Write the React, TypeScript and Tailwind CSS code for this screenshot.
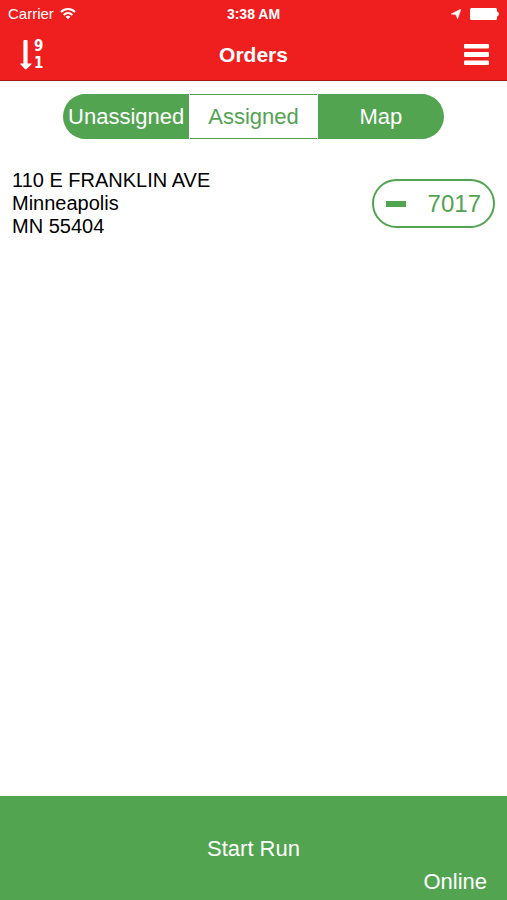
import { useState } from "react";

const tabs = ["Unassigned", "Assigned", "Map"];

const orders = [
  {
    id: "7017",
    street: "110 E FRANKLIN AVE",
    city: "Minneapolis",
    region: "MN 55404",
  },
];

function StatusBar() {
  return (
    <div className="grid grid-cols-3 items-center h-7 px-2 text-[15px] leading-5">
      <div className="flex items-center gap-1.5">
        <span>Carrier</span>
        <svg className="w-4 h-3" viewBox="0 0 16 12" fill="none" stroke="white" strokeWidth="2" aria-hidden="true">
          <path d="M1 4C5 0 11 0 15 4" />
          <path d="M3.6 6.9c2.6-2.4 6.2-2.4 8.8 0" />
          <path d="M8 11.2 5.5 8.7c1.4-1.2 3.6-1.2 5 0z" fill="white" stroke="none" />
        </svg>
      </div>
      <span className="text-center text-sm font-bold">3:38 AM</span>
      <div className="flex items-center justify-end gap-2">
        <svg className="w-2.5 h-2.5" viewBox="0 0 10 10" fill="white" aria-hidden="true">
          <path d="M10 0 6.6 10 5 5.8 0 5z" stroke="white" strokeWidth=".4" />
        </svg>
        <svg className="w-[30px] h-3" viewBox="0 0 30 12" fill="white" aria-hidden="true">
          <rect x="1" width="27" height="12" rx="1.5" />
          <path d="M28 3.5c2.6.8 2.6 4.2 0 5z" />
        </svg>
      </div>
    </div>
  );
}

function NavBar() {
  return (
    <div className="grid grid-cols-3 items-center px-4 pt-0.5 h-[52px]">
      <button
        type="button"
        aria-label="Sort orders"
        className="flex items-center gap-0.5 pl-1 justify-self-start cursor-pointer"
      >
        <svg className="w-3 h-[30px]" viewBox="0 0 12 30" fill="white" aria-hidden="true">
          <path d="M3.4 1q0-1 1-1h2.200q1 0 1 1v22.500h3.600q1 0 .3.800l-4.800 4.700q-.9.800-1.800 0L.4 24.300Q-.3 23.500.7 23.500h2.700z" />
        </svg>
        <span className="flex flex-col text-[15px] leading-[17px] font-bold font-['DejaVu_Sans_Condensed','DejaVu_Sans',sans-serif]">
          <span>9</span>
          <span>1</span>
        </span>
      </button>
      <h1 className="text-center text-[21px] leading-6 font-bold">Orders</h1>
      <button type="button" aria-label="Menu" className="justify-self-end cursor-pointer">
        <svg className="w-7 h-6" viewBox="0 0 28 24" fill="white" aria-hidden="true">
          <rect x="1" y="1" width="25" height="4.5" rx="1" />
          <rect x="1" y="9" width="25" height="5" rx="1" />
          <rect x="1" y="17.5" width="25" height="4.5" rx="1" />
        </svg>
      </button>
    </div>
  );
}

function App() {
  const [active, setActive] = useState("Assigned");

  return (
    <div className="flex flex-col min-h-screen bg-white font-['Liberation_Sans',Arial,sans-serif]">
      <header className="bg-[#ef1f1f] text-white border-b border-[#a81c18]">
        <StatusBar />
        <NavBar />
      </header>

      <main className="flex-1">
        <div
          role="tablist"
          className="flex gap-px mx-[63px] mt-[13px] h-[45px] rounded-full overflow-hidden text-[22px]"
        >
          {tabs.map((tab) => (
            <button
              key={tab}
              type="button"
              role="tab"
              aria-selected={active === tab}
              onClick={() => setActive(tab)}
              className={
                active === tab
                  ? "flex-1 basis-0 min-w-0 cursor-pointer border-y border-[#53a451] bg-white text-[#53a451]"
                  : "flex-1 basis-0 min-w-0 cursor-pointer border-y border-[#53a451] bg-[#53a451] text-white"
              }
            >
              {tab}
            </button>
          ))}
        </div>

        <ul className="mt-[30px]">
          {orders.map((order) => (
            <li key={order.id} className="flex items-center justify-between px-3">
              <address className="not-italic text-xl leading-[23px] text-black">
                {order.street}
                <br />
                {order.city}
                <br />
                {order.region}
              </address>
              <button
                type="button"
                className="flex items-center justify-between w-[123px] h-[49px] px-3 rounded-full border-2 border-[#53a451] text-2xl text-[#53a451] cursor-pointer"
              >
                <span className="w-5 h-1.5 bg-[#53a451]" />
                {order.id}
              </button>
            </li>
          ))}
        </ul>
      </main>

      <footer className="grid h-[104px] bg-[#53a451] text-[22px] text-white">
        <button type="button" className="col-start-1 row-start-1 cursor-pointer">
          Start Run
        </button>
        <span className="col-start-1 row-start-1 self-end justify-self-end px-5 pb-1 leading-7 pointer-events-none">
          Online
        </span>
      </footer>
    </div>
  );
}

export default App;
